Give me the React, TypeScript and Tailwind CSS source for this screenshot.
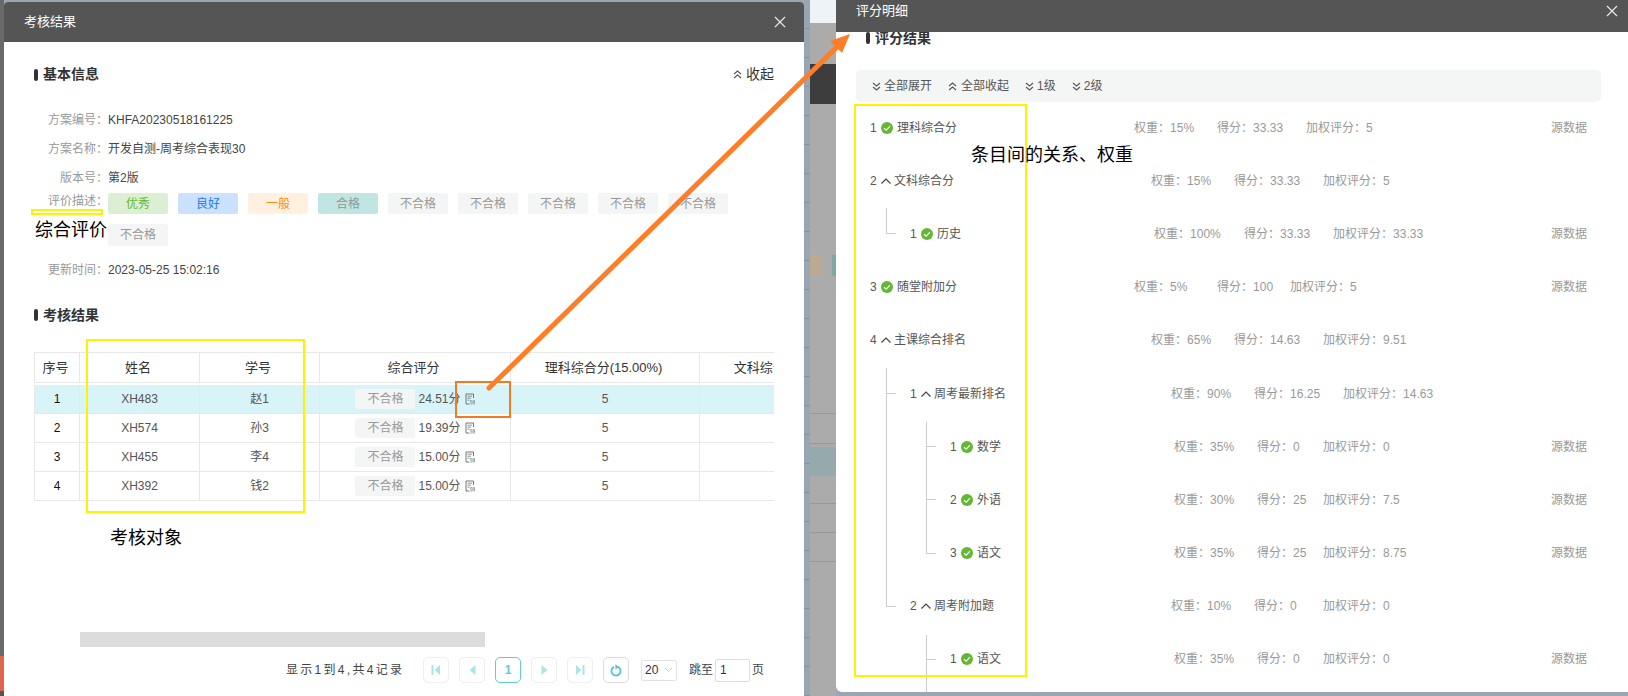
import React from "react";

const FONT = "font-['Liberation_Sans','Noto_Sans_CJK_SC',sans-serif]";
const COLON = "\uFF1A";

function CloseIcon() {
  return (
    <svg width="12" height="12" viewBox="0 0 12 12" className="block">
      <path d="M1 1 L11 11 M11 1 L1 11" stroke="#e8e8e8" strokeWidth="1.2" fill="none" />
    </svg>
  );
}

function DoubleChevron({ up }: { up?: boolean }) {
  return (
    <svg width="9" height="9" viewBox="0 0 9 9" className="block shrink-0">
      <path
        d={up ? "M1 4 L4.5 1 L8 4 M1 8 L4.5 5 L8 8" : "M1 1 L4.5 4 L8 1 M1 5 L4.5 8 L8 5"}
        stroke="#555"
        strokeWidth="1.1"
        fill="none"
      />
    </svg>
  );
}

function CheckIcon() {
  return (
    <svg width="12" height="12" viewBox="0 0 12 12" className="block shrink-0">
      <circle cx="6" cy="6" r="6" fill="#62b833" />
      <path d="M3 6.2 L5.2 8.2 L9 4.2" stroke="#fff" strokeWidth="1.2" fill="none" />
    </svg>
  );
}

function ChevUp() {
  return (
    <svg width="12" height="12" viewBox="0 0 12 12" className="block shrink-0">
      <path d="M1.5 8.5 L6 4 L10.5 8.5" stroke="#444" strokeWidth="1.2" fill="none" />
    </svg>
  );
}

function DocIcon() {
  return (
    <svg width="10" height="12" viewBox="0 0 10 12" className="block shrink-0">
      <path d="M8.5 5 V1 H1 V11 H4.5" stroke="#666" strokeWidth="0.9" fill="none" />
      <path d="M2.5 3.2 H7 M2.5 5.2 H6 M2.5 7.2 H4.5" stroke="#777" strokeWidth="0.8" fill="none" />
      <path d="M7.2 7.6 H5.4 V9.2 H7.2 V11 H5.4 M9.6 9.2 H8 V7.6 H9.6 V11 H8" stroke="#6f8f94" strokeWidth="0.7" fill="none" />
    </svg>
  );
}

function SectionTitle({ children }: { children: React.ReactNode }) {
  return (
    <div className="flex items-center gap-[5px] h-[20px]">
      <span className="w-[4px] h-[12px] rounded-[2px] bg-[#333] block" />
      <span className="text-[14px] font-bold text-[#333]">{children}</span>
    </div>
  );
}

function InfoRow({ label, value }: { label: string; value: string }) {
  return (
    <div className="flex items-center h-[29px] text-[12px]">
      <span className="w-[74px] text-right text-[#999]">
        {label}
        {COLON}
      </span>
      <span className="text-[#444]">{value}</span>
    </div>
  );
}

const descTags = [
  { t: "优秀", c: "bg-[#dcefd3] text-[#67b92f]" },
  { t: "良好", c: "bg-[#cce0ff] text-[#1677ff]" },
  { t: "一般", c: "bg-[#fff0e0] text-[#ff8a1f]" },
  { t: "合格", c: "bg-[#c0e5e3] text-[#8c9a9a]" },
  { t: "不合格", c: "bg-[#f4f6f6] text-[#999]" },
  { t: "不合格", c: "bg-[#f4f6f6] text-[#999]" },
  { t: "不合格", c: "bg-[#f4f6f6] text-[#999]" },
  { t: "不合格", c: "bg-[#f4f6f6] text-[#999]" },
  { t: "不合格", c: "bg-[#f4f6f6] text-[#999]" },
  { t: "不合格", c: "bg-[#f4f6f6] text-[#999] h-[22px]" },
];

const COLS = "grid grid-cols-[45px_120px_120px_191px_189px_189px]";
const CELL = "flex items-center justify-center border-l border-[#e8e8e8]";

const tableRows = [
  { n: "1", id: "XH483", name: "赵1", score: "24.51分", active: true },
  { n: "2", id: "XH574", name: "孙3", score: "19.39分", active: false },
  { n: "3", id: "XH455", name: "李4", score: "15.00分", active: false },
  { n: "4", id: "XH392", name: "钱2", score: "15.00分", active: false },
];

function ResultTable() {
  return (
    <div className="w-[740px] overflow-hidden text-[12px]">
      <div className={`${COLS} w-[854px] h-[31px] border-y border-[#e8e8e8] text-[13px] text-[#333]`}>
        {["序号", "姓名", "学号", "综合评分", "理科综合分(15.00%)", "文科综合分(15.00%)"].map((h) => (
          <div key={h} className={`${CELL} pr-[3px] whitespace-nowrap`}>
            {h}
          </div>
        ))}
      </div>
      <div className="h-[2px] w-[854px] bg-white" />
      {tableRows.map((r) => (
        <div
          key={r.n}
          className={`${COLS} w-[854px] h-[29px] border-b border-[#e8e8e8] text-[#555] ${r.active ? "bg-[#d9f4f8]" : ""}`}
        >
          <div className={`${CELL} text-[#111]`}>{r.n}</div>
          <div className={CELL}>{r.id}</div>
          <div className={CELL}>{r.name}</div>
          <div className={`${CELL} gap-[3px]`}>
            <span className="w-[60px] h-[20px] rounded-[2px] bg-[#f4f6f6] text-[#999] flex items-center justify-center">
              不合格
            </span>
            <span className="text-[#555]">{r.score}</span>
            <span className="ml-px">
              <DocIcon />
            </span>
          </div>
          <div className={CELL}>5</div>
          <div className={CELL} />
        </div>
      ))}
    </div>
  );
}

function PageBtn({ children, cls }: { children: React.ReactNode; cls?: string }) {
  return (
    <div
      className={`w-[26px] h-[26px] rounded-[5px] border flex items-center justify-center ${cls ?? "border-[#efefef]"}`}
    >
      {children}
    </div>
  );
}

function Pagination() {
  const teal = "#a9e5e6";
  return (
    <div className="flex items-center h-[26px] ml-[282px] text-[12px] text-[#444]">
      <span className="w-[137px] tracking-[2.3px] whitespace-nowrap">显示1到4,共4记录</span>
      <div className="flex gap-[10px]">
        <PageBtn>
          <svg width="10" height="12" viewBox="0 0 10 12">
            <path d="M0.5 1 H2.5 V11 H0.5 Z M9 1 V11 L3.5 6 Z" fill={teal} />
          </svg>
        </PageBtn>
        <PageBtn>
          <svg width="7" height="12" viewBox="0 0 7 12">
            <path d="M6.5 1 V11 L0.5 6 Z" fill={teal} />
          </svg>
        </PageBtn>
        <PageBtn cls="border-[#5fcdd3]">
          <span className="text-[#5fcdd3] font-bold">1</span>
        </PageBtn>
        <PageBtn>
          <svg width="7" height="12" viewBox="0 0 7 12">
            <path d="M0.5 1 V11 L6.5 6 Z" fill={teal} />
          </svg>
        </PageBtn>
        <PageBtn>
          <svg width="10" height="12" viewBox="0 0 10 12">
            <path d="M7.5 1 H9.5 V11 H7.5 Z M1 1 V11 L6.5 6 Z" fill={teal} />
          </svg>
        </PageBtn>
        <PageBtn cls="border-[#dddddd]">
          <svg width="12" height="13" viewBox="0 0 12 13">
            <path d="M4 2.9 A4.6 4.6 0 1 0 8 2.9" stroke="#52c6cc" strokeWidth="1.8" fill="none" />
            <path d="M5.4 0.3 L9 3 L5.4 5.4 Z" fill="#52c6cc" />
          </svg>
        </PageBtn>
      </div>
      <div className="ml-[12px] w-[36px] h-[21px] border border-[#e2e2e2] rounded-[2px] flex items-center justify-between px-[3px] text-[12px] text-[#333]">
        <span>20</span>
        <svg width="9" height="6" viewBox="0 0 9 6">
          <path d="M1 1 L4.5 4.5 L8 1" stroke="#a9c9cc" strokeWidth="0.9" fill="none" />
        </svg>
      </div>
      <span className="ml-[12px] whitespace-nowrap">跳至</span>
      <input
        readOnly
        value="1"
        className="ml-[2px] w-[35px] h-[23px] border border-[#dddddd] rounded-[2px] px-[4px] text-[12px] text-[#333] outline-none"
      />
      <span className="ml-[2px]">页</span>
    </div>
  );
}

function LeftModal() {
  return (
    <div className="w-[800px] mt-[2px] h-[694px] bg-white rounded-t-[4px] overflow-hidden shrink-0">
      <div className="h-[40px] bg-[#555] flex items-center justify-between pl-[20px] pr-[18px]">
        <span className="text-[13px] text-white">考核结果</span>
        <CloseIcon />
      </div>
      <div className="pl-[30px] pt-[22px]">
        <div className="flex items-center justify-between pr-[30px]">
          <SectionTitle>基本信息</SectionTitle>
          <div className="flex items-center gap-[4px] text-[14px] text-[#333]">
            <DoubleChevron up />
            <span>收起</span>
          </div>
        </div>
        <div className="mt-[20px]">
          <InfoRow label="方案编号" value="KHFA20230518161225" />
          <InfoRow label="方案名称" value="开发自测-周考综合表现30" />
          <InfoRow label="版本号" value="第2版" />
        </div>
        <div className="flex items-start text-[12px] mt-[1px]">
          <span className="w-[74px] text-right text-[#999] leading-[16px]">
            评价描述
            {COLON}
          </span>
          <div className="flex flex-wrap gap-[10px] w-[625px]">
            {descTags.map((d, i) => (
              <span
                key={i}
                className={`w-[60px] h-[21px] rounded-[2px] flex items-center justify-center ${d.c}`}
              >
                {d.t}
              </span>
            ))}
          </div>
        </div>
        <div className="mt-[9px]">
          <InfoRow label="更新时间" value="2023-05-25 15:02:16" />
        </div>
        <div className="mt-[21px]">
          <SectionTitle>考核结果</SectionTitle>
        </div>
        <div className="mt-[27px]">
          <ResultTable />
        </div>
      </div>
      <div className="mt-[131px] ml-[76px] w-[405px] h-[15px] bg-[#dcdcdc]" />
      <div className="mt-[10px]">
        <Pagination />
      </div>
    </div>
  );
}

const V1Full = "left-[30px] top-0 h-[54px] w-px";
const V2Full = "left-[70px] top-0 h-[54px] w-px";

type Row = {
  i: string;
  name: string;
  open?: boolean;
  pad: string;
  nameW: string;
  w: string;
  wW?: string;
  s: string;
  sW: string;
  a: string;
  src?: boolean;
  lines?: string[];
};

const rows: Row[] = [
  { i: "1", name: "理科综合分", pad: "pl-[14px]", nameW: "w-[278px]", w: "15%", s: "33.33", sW: "w-[89px]", a: "5", src: true },
  { i: "2", name: "文科综合分", open: true, pad: "pl-[14px]", nameW: "w-[295px]", w: "15%", s: "33.33", sW: "w-[89px]", a: "5" },
  {
    i: "1", name: "历史", pad: "pl-[54px]", nameW: "w-[298px]", w: "100%", wW: "w-[90px]", s: "33.33", sW: "w-[89px]", a: "33.33", src: true,
    lines: ["left-[30px] top-[1px] h-[26px] w-px", "left-[30px] top-[26px] h-px w-[10px]"],
  },
  { i: "3", name: "随堂附加分", pad: "pl-[14px]", nameW: "w-[278px]", w: "5%", s: "100", sW: "w-[73px]", a: "5", src: true },
  { i: "4", name: "主课综合排名", open: true, pad: "pl-[14px]", nameW: "w-[295px]", w: "65%", s: "14.63", sW: "w-[89px]", a: "9.51" },
  {
    i: "1", name: "周考最新排名", open: true, pad: "pl-[54px]", nameW: "w-[315px]", w: "90%", s: "16.25", sW: "w-[89px]", a: "14.63",
    lines: ["left-[30px] top-[1px] h-[53px] w-px", "left-[30px] top-[26px] h-px w-[10px]"],
  },
  {
    i: "1", name: "数学", pad: "pl-[94px]", nameW: "w-[318px]", w: "35%", s: "0", sW: "w-[66px]", a: "0", src: true,
    lines: [V1Full, "left-[70px] top-[2px] h-[52px] w-px", "left-[70px] top-[26px] h-px w-[10px]"],
  },
  {
    i: "2", name: "外语", pad: "pl-[94px]", nameW: "w-[318px]", w: "30%", s: "25", sW: "w-[66px]", a: "7.5", src: true,
    lines: [V1Full, V2Full, "left-[70px] top-[26px] h-px w-[10px]"],
  },
  {
    i: "3", name: "语文", pad: "pl-[94px]", nameW: "w-[318px]", w: "35%", s: "25", sW: "w-[66px]", a: "8.75", src: true,
    lines: [V1Full, "left-[70px] top-0 h-[27px] w-px", "left-[70px] top-[26px] h-px w-[10px]"],
  },
  {
    i: "2", name: "周考附加题", open: true, pad: "pl-[54px]", nameW: "w-[315px]", w: "10%", s: "0", sW: "w-[69px]", a: "0",
    lines: ["left-[30px] top-0 h-[27px] w-px", "left-[30px] top-[26px] h-px w-[10px]"],
  },
  {
    i: "1", name: "语文", pad: "pl-[94px]", nameW: "w-[318px]", w: "35%", s: "0", sW: "w-[66px]", a: "0", src: true,
    lines: ["left-[70px] top-[2px] h-[62px] w-px", "left-[70px] top-[26px] h-px w-[10px]"],
  },
];

function TreeRow({ r }: { r: Row }) {
  return (
    <div className="relative flex items-center h-[53.2px] text-[12px]">
      {r.lines?.map((l, idx) => (
        <span key={idx} className={`absolute bg-[#cccccc] ${l}`} />
      ))}
      <div className={`flex items-center shrink-0 text-[#555] ${r.pad} ${r.nameW}`}>
        <span className="w-[7px]">{r.i}</span>
        {r.open ? (
          <span className="ml-[3px] mr-[2px]">
            <ChevUp />
          </span>
        ) : (
          <span className="ml-[4px] mr-[4px]">
            <CheckIcon />
          </span>
        )}
        <span className="whitespace-nowrap">{r.name}</span>
      </div>
      <span className={`shrink-0 text-[#999] whitespace-nowrap ${r.wW ?? "w-[83px]"}`}>
        权重{COLON}
        {r.w}
      </span>
      <span className={`shrink-0 text-[#999] whitespace-nowrap ${r.sW}`}>
        得分{COLON}
        {r.s}
      </span>
      <span className="text-[#999] whitespace-nowrap">
        加权评分{COLON}
        {r.a}
      </span>
      {r.src && <span className="ml-auto text-[#999] whitespace-nowrap">源数据</span>}
    </div>
  );
}

function RightPanel() {
  return (
    <div className="flex-1 h-[692px] bg-white rounded-bl-[6px] overflow-hidden">
      <div className="relative z-10 h-[32px] bg-[#555] flex items-start justify-between pl-[20px] pr-[10px]">
        <span className="text-[13px] text-white leading-[22px]">评分明细</span>
        <span className="mt-[5px]">
          <CloseIcon />
        </span>
      </div>
      <div className="h-[12px] pl-[30px] flex items-center">
        <SectionTitle>评分结果</SectionTitle>
      </div>
      <div className="mt-[26px] ml-[20px] mr-[27px] h-[32px] bg-[#f4f6f6] rounded-[5px] flex items-center pl-[16px] text-[12px] text-[#555]">
        <DoubleChevron />
        <span className="ml-[3px]">全部展开</span>
        <span className="ml-[16px]">
          <DoubleChevron up />
        </span>
        <span className="ml-[4px]">全部收起</span>
        <span className="ml-[16px]">
          <DoubleChevron />
        </span>
        <span className="ml-[3px]">1级</span>
        <span className="ml-[16px]">
          <DoubleChevron />
        </span>
        <span className="ml-[3px]">2级</span>
      </div>
      <div className="-mt-px pl-[20px] pr-[41px]">
        {rows.map((r, idx) => (
          <TreeRow key={idx} r={r} />
        ))}
      </div>
    </div>
  );
}

function Gutter() {
  return (
    <div className="flex w-[32px] h-[696px] shrink-0">
      <div className="w-[6px] h-full bg-[repeating-linear-gradient(180deg,#98a5b2_0px,#98a5b2_28px,#8793a0_28px,#8793a0_29px)]" />
      <div className="flex-1 flex flex-col bg-[#ababab]">
        <div className="h-[23px] bg-[#eef3f8]" />
        <div className="h-[41px]" />
        <div className="h-[40px] bg-[#3d3d3d]" />
        <div className="h-[151px]" />
        <div className="h-[21px] flex justify-between">
          <span className="w-[12px] bg-[#bda98f]" />
          <span className="w-[4px] bg-[#7fa7a5]" />
        </div>
        <div className="h-[138px] border-b border-[#999]" />
        <div className="h-[30px] border-b border-[#999]" />
        <div className="h-[3px]" />
        <div className="h-[29px] bg-[#96aaad]" />
        <div className="h-[28px] border-b border-[#999]" />
        <div className="h-[29px] border-b border-[#999]" />
        <div className="h-[29px] border-b border-[#999]" />
      </div>
    </div>
  );
}

export default function App() {
  return (
    <div className={`relative w-[1628px] h-[696px] overflow-hidden bg-[#9aa6b2] flex ${FONT}`}>
      <div className="w-[4px] h-[696px] shrink-0 flex flex-col bg-[#6a6a6a]">
        <div className="flex-1" />
        <div className="h-[35px] bg-[#e0654f]" />
        <div className="h-[5px] bg-[#555]" />
      </div>
      <LeftModal />
      <Gutter />
      <RightPanel />

      {/* 标注层 */}
      <div className="absolute left-[31px] top-[209px] w-[72px] h-[6px] border-2 border-[#fff200]" />
      <div className="absolute left-[35px] top-[218px] text-[18px] leading-[24px] text-black">综合评价</div>
      <div className="absolute left-[86px] top-[339px] w-[219px] h-[174px] border-2 border-[#fff200]" />
      <div className="absolute left-[110px] top-[526px] text-[18px] leading-[24px] text-black">考核对象</div>
      <div className="absolute left-[455px] top-[381px] w-[56px] h-[37px] border-2 border-[#f47a20]" />
      <div className="absolute left-[854px] top-[104px] w-[173px] h-[573px] border-2 border-[#fff200]" />
      <div className="absolute left-[971px] top-[143px] text-[18px] leading-[24px] text-black whitespace-nowrap">
        条目间的关系、权重
      </div>
      <svg className="absolute left-0 top-0 z-20" width="1628" height="696" viewBox="0 0 1628 696">
        <path d="M489 388 L842 42" stroke="#fd7e26" strokeWidth="5" strokeLinecap="round" fill="none" />
        <path d="M850 34 L830 41 L842 53 Z" fill="#fd7e26" />
      </svg>
    </div>
  );
}
